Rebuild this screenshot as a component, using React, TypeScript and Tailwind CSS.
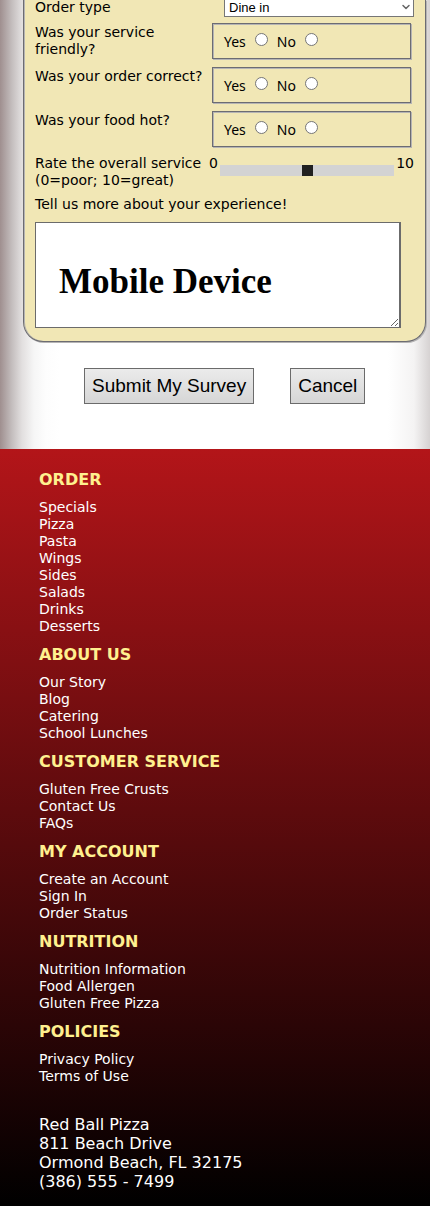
import { ChevronDown } from "lucide-react";

const questions = [
  { name: "friendly", text: "Was your service friendly?" },
  { name: "correct", text: "Was your order correct?" },
  { name: "hot", text: "Was your food hot?" },
];

const sections = [
  {
    title: "ORDER",
    links: ["Specials", "Pizza", "Pasta", "Wings", "Sides", "Salads", "Drinks", "Desserts"],
  },
  { title: "ABOUT US", links: ["Our Story", "Blog", "Catering", "School Lunches"] },
  { title: "CUSTOMER SERVICE", links: ["Gluten Free Crusts", "Contact Us", "FAQs"] },
  { title: "MY ACCOUNT", links: ["Create an Account", "Sign In", "Order Status"] },
  { title: "NUTRITION", links: ["Nutrition Information", "Food Allergen", "Gluten Free Pizza"] },
  { title: "POLICIES", links: ["Privacy Policy", "Terms of Use"] },
];

const radioClass =
  "mb-1 ml-[9px] size-[13px] shrink-0 appearance-none rounded-full border border-[#767676] bg-white checked:border-4 checked:border-[#0075ff]";

const buttonClass =
  "h-9 border border-[#6b6b6b] bg-linear-to-b from-[#ebebeb] to-[#d6d6d6] px-[7px] font-['Liberation_Sans',sans-serif] text-[19px] leading-6 text-black";

function YesNo({ name, text }: { name: string; text: string }) {
  return (
    <div className="grid grid-cols-[177px_1fr]">
      <span id={`${name}-label`} className="pt-px">
        {text}
      </span>
      <div
        role="radiogroup"
        aria-labelledby={`${name}-label`}
        className="mr-[3px] flex h-9 items-center border border-[#6c6c72] px-[11px] font-['Noto_Sans',sans-serif] text-[14px] shadow-[1px_1px_0_#b5b4b4,inset_1px_1px_0_#b5b4b4]"
      >
        <label htmlFor={`${name}-yes`}>Yes</label>
        <input id={`${name}-yes`} type="radio" name={name} className={radioClass} />
        <label htmlFor={`${name}-no`} className="ml-[9px]">No</label>
        <input id={`${name}-no`} type="radio" name={name} className={radioClass} />
      </div>
    </div>
  );
}

export default function App() {
  return (
    <div className="font-['DejaVu_Sans',sans-serif]">
      <main className="bg-[linear-gradient(to_right,#9f8f8f_0px,#c4bebe_12px,#e2dfdf_22px,#f6f6f6_34px,#fdfdfd_46px,#ffffff_60px,#ffffff_calc(100%-42px),#f4f3f3_calc(100%-16px),#d6d2d2_100%)] pb-[45px]">
        <form onSubmit={(e) => e.preventDefault()}>
          <div className="ml-[23px] mr-1 rounded-b-[20px] border border-t-0 border-[#6c6c72] bg-[#f1e7b5] px-[11px] pb-[13px] text-[14px] leading-[17px] text-black shadow-[1px_1px_0_#b5b4b4,inset_1px_0_0_#b5b4b4]">
            <div className="flex flex-col gap-2">
              <div className="grid h-[15px] grid-cols-[189px_1fr]">
                <label htmlFor="order-type" className="leading-[15px]">Order type</label>
                <div className="relative">
                  <select
                    id="order-type"
                    className="block h-[17px] w-full appearance-none border border-t-0 border-[#767676] bg-white px-1 font-['Liberation_Sans',sans-serif] text-[13px] leading-[14px]"
                  >
                    <option>Dine in</option>
                    <option>Carry out</option>
                    <option>Delivery</option>
                  </select>
                  <ChevronDown
                    className="pointer-events-none absolute right-[2px] top-[1px] size-3 text-[#666]"
                    strokeWidth={3}
                  />
                </div>
              </div>
              {questions.map((q) => (
                <YesNo key={q.name} name={q.name} text={q.text} />
              ))}
              <div className="grid grid-cols-[174px_1fr]">
                <label htmlFor="rating">Rate the overall service (0=poor; 10=great)</label>
                <div className="flex h-[17px]">
                  <span>0</span>
                  <input
                    id="rating"
                    type="range"
                    min={0}
                    max={10}
                    defaultValue={5}
                    className="mx-[2px] mt-[10px] h-[11px] min-w-0 flex-1 appearance-none bg-[#d3d3d3] [&::-webkit-slider-thumb]:size-[11px] [&::-webkit-slider-thumb]:appearance-none [&::-webkit-slider-thumb]:bg-[#212121]"
                  />
                  <span>10</span>
                </div>
              </div>
            </div>
            <label htmlFor="comments" className="mb-[9px] mt-[7px] block">
              Tell us more about your experience!
            </label>
            <textarea
              id="comments"
              defaultValue="Mobile Device"
              className="block h-[106px] w-[calc(100%-13px)] border border-r-2 border-[#6b6b6b] bg-white px-[23px] pt-[38px] font-['Liberation_Serif',serif] text-[35px] font-bold leading-[42px]"
            />
          </div>
          <div className="ml-[84px] mt-[26px] flex gap-9">
            <button type="submit" className={buttonClass}>Submit My Survey</button>
            <button type="reset" className={buttonClass}>Cancel</button>
          </div>
        </form>
      </main>
      <footer className="bg-linear-to-b/srgb from-[#b31519] to-black pb-[15px] pl-[39px] pt-[11px] text-white">
        <nav>
          {sections.map((s) => (
            <section key={s.title}>
              <h2 className="py-[10px] text-[16px] font-bold leading-[19px] text-[#fff08f]">{s.title}</h2>
              <ul className="text-[14px] leading-[17px]">
                {s.links.map((l) => (
                  <li key={l}>
                    <a href="#">{l}</a>
                  </li>
                ))}
              </ul>
            </section>
          ))}
        </nav>
        <address className="mt-[30px] text-[16px] not-italic leading-[19px]">
          Red Ball Pizza
          <br />
          811 Beach Drive
          <br />
          Ormond Beach, FL 32175
          <br />
          (386) 555 - 7499
        </address>
      </footer>
    </div>
  );
}
